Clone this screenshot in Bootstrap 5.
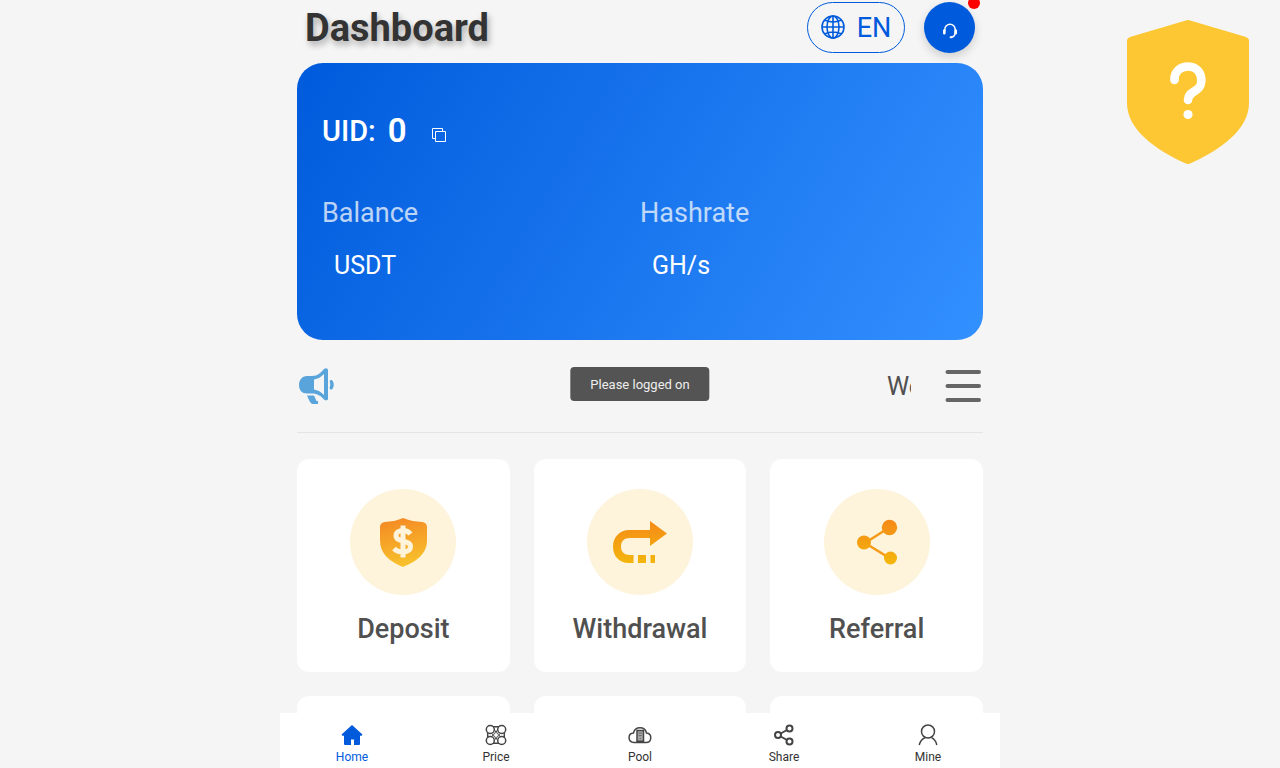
<!DOCTYPE html>
<html lang="en">
<head>
<meta charset="utf-8">
<meta name="viewport" content="width=device-width, initial-scale=1">
<title>Dashboard</title>
<link href="https://cdn.jsdelivr.net/npm/bootstrap@5.3.0/dist/css/bootstrap.min.css" rel="stylesheet">
<style>
:root { --brand: #005bdc; --ink: #333; --label: #505050; }
body { font-family: Roboto, "Liberation Sans", sans-serif; background: #f5f5f5; color: var(--ink); }
.app-shell { max-width: 720px; }
.app-main { padding: 0 17px; scrollbar-width: none; }
.app-main::-webkit-scrollbar { display: none; }
.app-header { height: 63px; padding: 2px 8px 10px; }
.app-title { font-size: 38px; line-height: 52px; font-weight: 700; text-shadow: 2px 4px 6px rgba(0,0,0,.3); }
.lang-btn { width: 98px; height: 51px; border: 1px solid var(--brand); color: var(--brand); font-size: 27px; line-height: 48px; gap: 12px; margin-right: 19px; }
.lang-btn svg { margin-bottom: 2px; }
.service-btn { width: 51px; height: 51px; background: var(--brand); box-shadow: 0 4px 10px rgba(0,0,0,.16); }
.service-btn svg { margin-top: 6px; }
.unread-dot { width: 12px; height: 12px; background: #f00; top: -5px; right: -5px; }
.account-panel { height: 277px; padding: 48px 25px 0; border-radius: 26px; color: #fff; background: linear-gradient(120deg, #005bdc, #3390ff); }
.uid-row { height: 40px; font-size: 29px; line-height: 40px; font-weight: 500; }
.uid-value { font-size: 33px; font-weight: 600; margin-left: 12px; }
.copy-btn { margin: 8px 0 0 24px; }
.stats-row { margin-top: 42px; }
.stat-name { font-size: 27px; line-height: 40px; opacity: .72; }
.stat-unit { font-size: 25px; line-height: 40px; margin-top: 13px; padding-left: 12px; }
.notice-row { height: 93px; border-bottom: 1px solid #e4e4e4; }
.notice-text { margin-left: 27px; margin-right: 34px; height: 40px; font-size: 25px; line-height: 42px; color: var(--label); }
.notice-text span { margin-left: calc(100% - 24px); }
.tile-grid { display: grid; grid-template-columns: repeat(3, 1fr); gap: 24px; padding: 26px 0 80px; }
.tile { aspect-ratio: 1; background: #fff; border-radius: 12px; color: var(--label); font-size: 27px; line-height: 40px; font-weight: 500; padding-top: 30px; }
.tile-icon { width: 106px; height: 106px; background: #fef4db; margin-bottom: 14px; }
.tab-bar { height: 55px; background: #fff; }
.tab-link { color: var(--ink); font-size: 12px; line-height: 16px; padding-top: 11px; gap: 3px; }
.tab-link.active { color: var(--brand); }
.toast-note { top: 367px; padding: 0 20px; height: 34px; background: #545454; color: #eee; border-radius: 4px; font-size: 13px; line-height: 35px; }
.security-btn { top: 20px; right: 31px; }
</style>
</head>
<body>
<div class="app-shell vh-100 mx-auto d-flex flex-column">
  <main class="app-main flex-grow-1 overflow-auto">
    <header class="app-header d-flex align-items-start justify-content-between">
      <h1 class="app-title m-0">Dashboard</h1>
      <div class="d-flex">
        <button type="button" class="lang-btn d-flex align-items-center justify-content-center rounded-pill bg-transparent p-0">
          <svg width="24" height="24" viewBox="0 0 24 24" fill="none" stroke="currentColor" stroke-width="1.6" aria-hidden="true"><circle cx="12" cy="12" r="11"/><ellipse cx="12" cy="12" rx="6" ry="11"/><path d="M12 1v22M1 12h22M4 5.200c5 2.200 11 2.200 16 0M4 18.800c5-2.200 11-2.200 16 0"/></svg>
          <span>EN</span>
        </button>
        <button type="button" class="service-btn position-relative d-flex align-items-center justify-content-center rounded-circle border-0 p-0" aria-label="Support">
          <svg width="16" height="16" viewBox="0 0 16 16" fill="none" stroke="#fff" stroke-width="1.5" stroke-linecap="round" aria-hidden="true"><path d="M2.800 8V6.500a5.200 5.200 0 0 1 10.400 0V9c0 3.200-1.500 5-4 5.200"/><path d="M2.300 7.500v2.800M13.700 7.500v2.800" stroke-width="2.600"/><path d="M8.600 14.200h.8" stroke-width="2"/></svg>
          <span class="unread-dot position-absolute rounded-circle"></span>
        </button>
      </div>
    </header>

    <section class="account-panel">
      <div class="uid-row d-flex align-items-center">
        <span>UID:</span><span class="uid-value">0</span>
        <button type="button" class="copy-btn d-flex border-0 bg-transparent p-0" aria-label="Copy UID">
          <svg width="16" height="16" viewBox="0 0 16 16" fill="none" stroke="#fff" aria-hidden="true"><path d="M4 11.500H1.500v-10h10V4M4.500 4.500h10v10h-10z"/></svg>
        </button>
      </div>
      <div class="stats-row row g-0">
        <div class="col-6"><div class="stat-name">Balance</div><div class="stat-unit">USDT</div></div>
        <div class="col-6"><div class="stat-name">Hashrate</div><div class="stat-unit">GH/s</div></div>
      </div>
    </section>

    <section class="notice-row d-flex align-items-center">
      <svg class="flex-shrink-0" width="38" height="38" viewBox="0 0 38 38" aria-hidden="true"><path d="M10 9h5c6 0 9-3.500 12-7 2-1.500 4-.5 4 1.500v28c0 2-2 2.500-4 1-3-3.500-7-6-12-6h-5C5 26.500 2 23 2 18s3-9 8-9z" fill="#5aa4dc"/><path d="M17 12.500c4-.5 7-2.500 10-5.500v21c-3-3-6-5-10-5.500z" fill="#f5f5f5"/><path d="M10 28.500h7l2.500 5.500H21v3h-5c-2 0-3-2-4-4z" fill="#5aa4dc"/><path d="M33 13.500c1-1 2.500-.5 3 1 1 2 1 4.500 0 6.500-.5 1.500-2 2-3 1-.8-1 0-2 .3-4.200 0-1.800-1-3.300-.3-4.300z" fill="#5aa4dc"/></svg>
      <div class="notice-text flex-grow-1 overflow-hidden text-nowrap"><span>Welcome</span></div>
      <button type="button" class="border-0 bg-transparent p-0 d-flex" aria-label="Notices">
        <svg width="38" height="34" viewBox="0 0 38 34" stroke="#666" stroke-width="4" stroke-linecap="round" aria-hidden="true"><path d="M2.500 3h31.500M2.500 17h31.500M2.500 31h31.500"/></svg>
      </button>
    </section>

    <svg width="0" height="0" class="position-absolute" aria-hidden="true"><defs>
      <linearGradient id="amber" gradientUnits="userSpaceOnUse" x1="0" y1="28" x2="0" y2="78"><stop stop-color="#f5871a"/><stop offset="1" stop-color="#f3b90a"/></linearGradient>
      <linearGradient id="gold" x1=".3" y1="0" x2=".5" y2="1"><stop stop-color="#f48a24"/><stop offset="1" stop-color="#f8c32c"/></linearGradient>
    </defs></svg>

    <section class="tile-grid">
      <a href="#deposit" class="tile d-flex flex-column align-items-center text-decoration-none">
        <span class="tile-icon rounded-circle"><svg width="106" height="106" viewBox="0 0 106 106" class="d-block" aria-hidden="true"><path d="M53 29c7 3 13 3.500 19 4 3 .5 5 2 5 5v13c0 14-10 21-24 27-14-6-23-13-23-27V38c0-3 2-4.500 5-5 6-.5 11-1 18-4z" fill="url(#gold)"/><path d="M60.500 45c-2-2.500-4-3.500-7.500-3.500-4 0-7 1.700-7 5.200 0 7 14.500 4 14.500 10.800 0 3.500-3 5.500-7.500 5.500-4 0-7-1.300-9-3.500M53 36.500v32" fill="none" stroke="#fef4db" stroke-width="5"/></svg></span>
        Deposit
      </a>
      <a href="#withdrawal" class="tile d-flex flex-column align-items-center text-decoration-none">
        <span class="tile-icon rounded-circle"><svg width="106" height="106" viewBox="0 0 106 106" class="d-block" fill="url(#amber)" aria-hidden="true"><path d="M63 32l17 12.500L63 57v-8H43c-6 0-9 3-9 8.500S37 66 43 66h3.500v8H42c-10 0-16-7-16-16.500C26 48 33 41 42 41h21zM51 66h8v8h-8zM63.500 66H68v8h-4.500z"/></svg></span>
        Withdrawal
      </a>
      <a href="#referral" class="tile d-flex flex-column align-items-center text-decoration-none">
        <span class="tile-icon rounded-circle"><svg width="106" height="106" viewBox="0 0 106 106" class="d-block" fill="url(#amber)" aria-hidden="true"><path d="M41 54l25-16M41 54l26 16" stroke="#f59a15" stroke-width="2.500"/><circle cx="65.500" cy="38.500" r="7.700"/><circle cx="40" cy="53.500" r="7"/><circle cx="66.500" cy="69" r="6.500"/></svg></span>
        Referral
      </a>
      <div class="tile"></div><div class="tile"></div><div class="tile"></div>
    </section>
  </main>

  <nav class="tab-bar d-flex flex-shrink-0" aria-label="Main">
    <a href="#home" class="tab-link active w-100 d-flex flex-column align-items-center text-decoration-none" aria-current="page">
      <svg class="flex-shrink-0" width="24" height="22" viewBox="0 0 24 22" aria-hidden="true"><path d="M12 1l10.500 9.500-.8 1.200H20V20q0 1-1 1h-5v-5.500h-3V21H5q-1 0-1-1v-8.300H2.300l-.8-1.200z" fill="currentColor"/></svg>Home</a>
    <a href="#price" class="tab-link w-100 d-flex flex-column align-items-center text-decoration-none">
      <svg class="flex-shrink-0" width="24" height="22" viewBox="0 0 24 22" fill="none" stroke="#444" stroke-width="1.500" aria-hidden="true"><circle cx="6.300" cy="5.500" r="4"/><circle cx="17.700" cy="5.500" r="4"/><circle cx="6.300" cy="16.500" r="4"/><circle cx="17.700" cy="16.500" r="4"/><path d="M9 2.700h6M9 19.300h6M3.700 8.700v4.600M20.300 8.700v4.600" /><path d="M12 6.500Q12.500 10.500 16 11q-3.500.5-4 4.500-.5-4-4-4.500 3.500-.5 4-4.500z" stroke-width="1"/></svg>Price</a>
    <a href="#pool" class="tab-link w-100 d-flex flex-column align-items-center text-decoration-none">
      <svg class="flex-shrink-0" width="24" height="22" viewBox="0 0 24 22" fill="none" stroke="#444" stroke-width="1.500" aria-hidden="true"><path d="M6 18.500C-.5 18-.5 9.500 5.500 9 7 2 17 2 18.500 9c6 .5 5.500 9.500-.5 9.500z"/><path d="M9 6.500h6.500v10.700H9z" fill="#aaa"/><path d="M10.500 9.200h3.500M10.500 11.700h3.500M11.500 14.500h1.500" stroke="#666" stroke-width="1"/></svg>Pool</a>
    <a href="#share" class="tab-link w-100 d-flex flex-column align-items-center text-decoration-none">
      <svg class="flex-shrink-0" width="24" height="22" viewBox="0 0 24 22" fill="none" stroke="#444" stroke-width="2" aria-hidden="true"><circle cx="6" cy="11" r="3"/><circle cx="17.500" cy="4.500" r="3"/><circle cx="17.500" cy="17.500" r="3"/><path d="M8.700 9.500L15 6M8.700 12.500L15 16"/></svg>Share</a>
    <a href="#mine" class="tab-link w-100 d-flex flex-column align-items-center text-decoration-none">
      <svg class="flex-shrink-0" width="24" height="22" viewBox="0 0 24 22" fill="none" stroke="#444" stroke-width="1.500" aria-hidden="true"><circle cx="12" cy="7.500" r="6.500"/><path d="M9 13.700c-3.500 1.500-5 4-5.800 7.300M15.500 13.700c3 1.500 4.700 4 5.300 7.300"/></svg>Mine</a>
  </nav>
</div>

<div class="toast-note position-fixed start-50 translate-middle-x text-nowrap" role="status">Please logged on</div>
<button type="button" class="security-btn position-fixed border-0 bg-transparent p-0 d-flex" aria-label="Security help">
  <svg width="122" height="144" viewBox="0 0 122 144" aria-hidden="true"><path d="M58 .7q3-1.400 6 0L119 17q3 1 3 4v62c0 27-29 47-59 60.500q-2 1-4 0C29 130 0 110 0 83V21q0-3 3-4z" fill="#fcc732"/><path d="M47.500 60C47 52 53 46.500 61 46.500c9 0 14 7 13.300 15C73.500 73 61 70 61 80" fill="none" stroke="#fff" stroke-width="8.600" stroke-linecap="round"/><circle cx="61" cy="94.500" r="4.600" fill="#fff"/></svg>
</button>
<script src="https://cdn.jsdelivr.net/npm/bootstrap@5.3.0/dist/js/bootstrap.bundle.min.js"></script>
</body>
</html>
